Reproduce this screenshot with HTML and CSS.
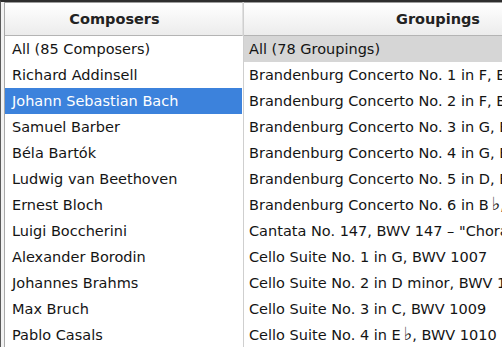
FILE: index.html
```html
<!DOCTYPE html>
<html lang="en">
<head>
    <meta charset="UTF-8">
    <meta name="viewport" content="width=device-width, initial-scale=1.0">
    <link rel="stylesheet" href="styles.css">
</head>
<body>
    <div id="browser">
        <div class="column composers">
            <div class="column-header">Composers</div>
            <ul class="list">
                <li>All (85 Composers)</li>
                <li>Richard Addinsell</li>
                <li class="selected">Johann Sebastian Bach</li>
                <li>Samuel Barber</li>
                <li>Béla Bartók</li>
                <li>Ludwig van Beethoven</li>
                <li>Ernest Bloch</li>
                <li>Luigi Boccherini</li>
                <li>Alexander Borodin</li>
                <li>Johannes Brahms</li>
                <li>Max Bruch</li>
                <li>Pablo Casals</li>
            </ul>
        </div>
        <div class="column groupings">
            <div class="column-header">Groupings</div>
            <ul class="list">
                <li class="inactive">All (78 Groupings)</li>
                <li>Brandenburg Concerto No. 1 in F, BWV 1046</li>
                <li>Brandenburg Concerto No. 2 in F, BWV 1047</li>
                <li>Brandenburg Concerto No. 3 in G, BWV 1048</li>
                <li>Brandenburg Concerto No. 4 in G, BWV 1049</li>
                <li>Brandenburg Concerto No. 5 in D, BWV 1050</li>
                <li>Brandenburg Concerto No. 6 in B<span class="flat">♭</span>, BWV 1051</li>
                <li>Cantata No. 147, BWV 147 – "Chorale"</li>
                <li>Cello Suite No. 1 in G, BWV 1007</li>
                <li>Cello Suite No. 2 in D minor, BWV 1008</li>
                <li>Cello Suite No. 3 in C, BWV 1009</li>
                <li>Cello Suite No. 4 in E<span class="flat">♭</span>, BWV 1010</li>
            </ul>
        </div>
    </div>
</body>
</html>
```

FILE: styles.css
```css
html, body {
    margin: 0;
    padding: 0;
    background-color: #ffffff;
    font-family: "DejaVu Sans", sans-serif;
    overflow: hidden;
}

#browser {
    display: grid;
    grid-template-columns: 240px 1fr;
    height: 347px;
    border-top: 2px solid #2e2e2e;
    border-left: 1px solid #5a5a5a;
    padding-left: 3px;
    background-color: #f2f2f2;
    overflow: hidden;
}

.column {
    background-color: #ffffff;
    min-width: 0;
    overflow: hidden;
}

.composers {
    border-left: 1px solid #a8a8a8;
    border-right: 1px solid #cfcfcf;
}

.column-header {
    height: 32px;
    line-height: 32px;
    border-top: 1px solid #9c9c9c;
    border-bottom: 1px solid #b4b4b4;
    background: linear-gradient(#ffffff, #ececec);
    text-align: center;
    font-weight: bold;
    font-size: 14.5px;
    color: #222222;
}

.composers .column-header {
    border-right: 1px solid #e0e0e0;
    padding-right: 18px;
}

.groupings .column-header {
    padding-left: 130px;
}

.list {
    list-style: none;
    margin: 0;
    padding: 0;
}

.list li {
    height: 26px;
    line-height: 26px;
    padding-left: 7px;
    font-size: 14.5px;
    color: #141414;
    white-space: nowrap;
}

.composers .list li {
    margin-right: 1px;
}

.list li.selected {
    background-color: #3c82dc;
    color: #ffffff;
}

.list li.inactive {
    background-color: #d6d6d6;
}

.groupings .list li {
    padding-left: 5px;
}

.flat {
    display: inline-block;
    margin-left: 3px;
    font-size: 1.25em;
    line-height: 1;
}
```
